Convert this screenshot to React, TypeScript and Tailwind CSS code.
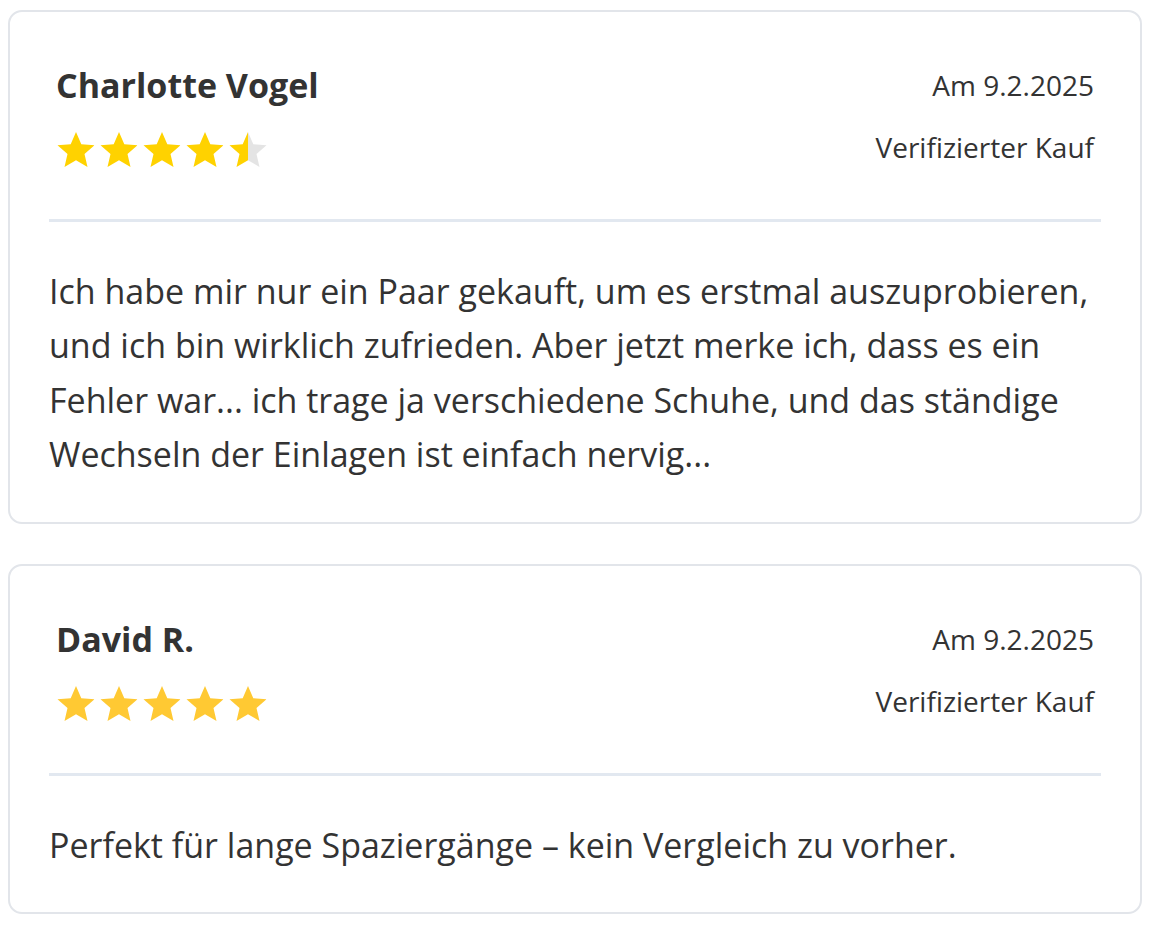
import React from "react";

const Star = ({ fill, color, id }: { fill: number; color: string; id: string }) => (
  <svg width="40" height="38" viewBox="0 0 40 38" style={{ filter: "blur(0.4px)" }}>
    <defs>
      <linearGradient id={id} x1="0" x2="1" y1="0" y2="0">
        <stop offset={`${fill * 100}%`} stopColor={color} />
        <stop offset={`${fill * 100}%`} stopColor="#e4e4e4" />
      </linearGradient>
    </defs>
    <polygon
      points="20,1 25.3,13.2 38.5,14.3 28.5,23 31.5,36 20,29.2 8.5,36 11.5,23 1.5,14.3 14.7,13.2"
      fill={`url(#${id})`}
    />
  </svg>
);

const Stars = ({ rating, color, prefix }: { rating: number; color: string; prefix: string }) => (
  <div className="flex gap-[3px] h-[38px] items-center">
    {[0, 1, 2, 3, 4].map((i) => (
      <Star key={i} id={`${prefix}-${i}`} color={color} fill={Math.max(0, Math.min(1, rating - i))} />
    ))}
  </div>
);

const Review = ({
  name,
  rating,
  color,
  prefix,
  text,
}: {
  name: string;
  rating: number;
  color: string;
  prefix: string;
  text: string;
}) => (
  <div className="border-2 border-[#e2e5ea] rounded-[14px] bg-white px-[39px] pt-[49px] pb-[40px]">
    <div className="flex justify-between px-[7px]">
      <div className="flex flex-col">
        <div className="h-[48px] leading-[48px] text-[34px] font-bold text-[#333333]">{name}</div>
        <div className="mt-[22px]">
          <Stars rating={rating} color={color} prefix={prefix} />
        </div>
      </div>
      <div className="flex flex-col items-end text-[#333333]">
        <div className="h-[48px] leading-[48px] text-[28px]">Am 9.2.2025</div>
        <div className="mt-[17px] h-[42px] leading-[42px] text-[28px]">Verifizierter Kauf</div>
      </div>
    </div>
    <div className="mt-[50px] h-[3px] bg-[#e2e8f0]" />
    <p className="mt-[42px] text-[34px] leading-[54.4px] text-[#333333]">{text}</p>
  </div>
);

export default function App() {
  return (
    <div
      className="bg-white min-h-[928px] pt-[10px] pl-[8px]"
      style={{ fontFamily: '"Open Sans", "Liberation Sans", sans-serif' }}
    >
      <div className="w-[1134px] flex flex-col gap-[40px]">
        <Review
          name="Charlotte Vogel"
          rating={4.5}
          color="#ffd200"
          prefix="a"
          text="Ich habe mir nur ein Paar gekauft, um es erstmal auszuprobieren, und ich bin wirklich zufrieden. Aber jetzt merke ich, dass es ein Fehler war... ich trage ja verschiedene Schuhe, und das ständige Wechseln der Einlagen ist einfach nervig..."
        />
        <Review
          name="David R."
          rating={5}
          color="#ffc933"
          prefix="b"
          text="Perfekt für lange Spaziergänge – kein Vergleich zu vorher."
        />
      </div>
    </div>
  );
}
